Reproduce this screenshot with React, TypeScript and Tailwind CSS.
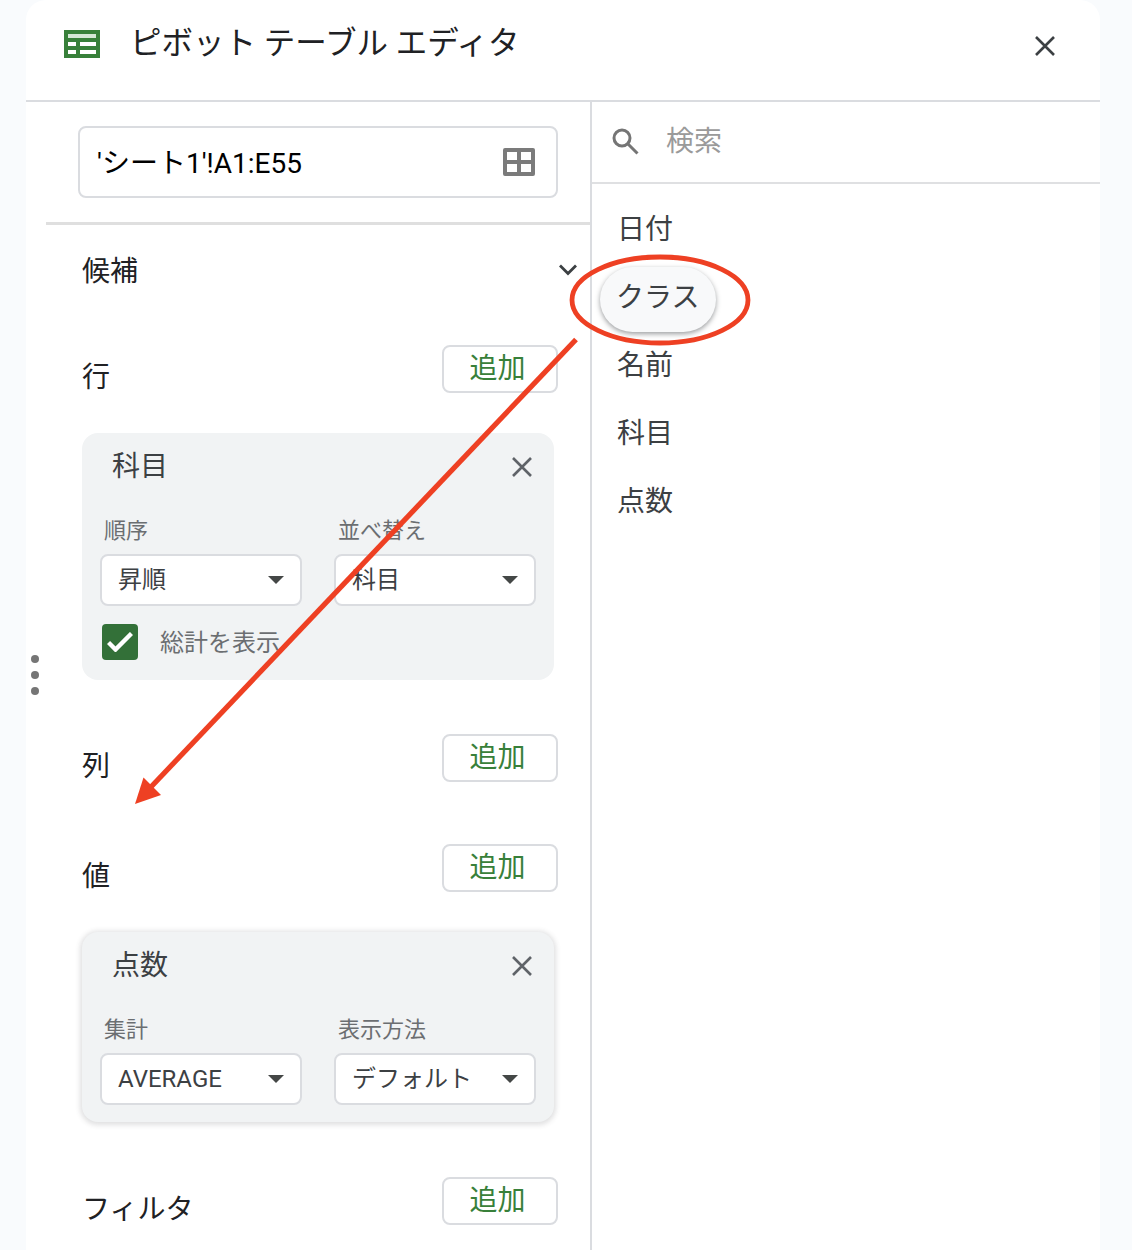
import React from "react";

function CloseIcon({ className }: { className: string }) {
  return (
    <svg viewBox="0 0 20 20" className={className} fill="none" stroke="currentColor" strokeWidth="2.6">
      <path d="M1 1 19 19M19 1 1 19" />
    </svg>
  );
}

function TableIcon() {
  return (
    <svg viewBox="0 0 36 28" className="h-7 w-9" shapeRendering="crispEdges">
      <path fill="#38803a" d="M0 0h36v28H0z" />
      <path fill="#d5e7d6" d="M4 4h28v4H4z" />
      <path fill="#fff" d="M4 12h8v4H4zM16 12h16v4H16zM4 20h8v4H4zM16 20h16v4H16z" />
    </svg>
  );
}

function GridIcon() {
  return (
    <svg viewBox="0 0 32 28" className="h-7 w-8" fill="#7b7b7b">
      <path
        fillRule="evenodd"
        d="M2 0h28a2 2 0 0 1 2 2v24a2 2 0 0 1-2 2H2a2 2 0 0 1-2-2V2a2 2 0 0 1 2-2zM4 4v8h10V4zM18 4v8h10V4zM4 16v8h10v-8zM18 16v8h10v-8z"
      />
    </svg>
  );
}

function Select({ label, value }: { label: string; value: string }) {
  return (
    <div className="w-[202px]">
      <div className="h-8 pl-1 text-[22px] leading-[34px] text-[#6b6e71]">{label}</div>
      <div className="mt-2 flex h-[52px] items-center justify-between rounded-lg border-2 border-[#dadce0] bg-white pr-4 pl-4 text-2xl leading-[46px] text-[#3c4043]">
        <span className="whitespace-nowrap">{value}</span>
        <svg viewBox="0 0 16 8" className="h-2 w-4" fill="#444746">
          <path d="M0 0h16L8 8z" />
        </svg>
      </div>
    </div>
  );
}

function SectionHead({ title }: { title: string }) {
  return (
    <div className="flex h-12 items-start justify-between pr-8 pl-14">
      <span className="mt-2 h-12 text-[28px] leading-[50px] text-[#202124]">{title}</span>
      <button className="flex h-12 w-[116px] justify-center rounded-lg border-2 border-[#dadce0] bg-white pr-[5px] text-[28px] leading-[44px] text-[#38803a]">
        追加
      </button>
    </div>
  );
}

function CardHead({ title }: { title: string }) {
  return (
    <div className="flex h-16 items-center justify-between pr-[22px] pl-[30px] text-[28px] text-[#3c4043]">
      <span className="h-16 leading-[68px]">{title}</span>
      <CloseIcon className="mt-1 h-5 w-5 text-[#5f6368]" />
    </div>
  );
}

const item = "h-[68px] pl-[25px] text-[28px] leading-[70px] text-[#3c4043]";

export default function App() {
  return (
    <div className="relative h-[1250px] w-[1132px] overflow-hidden bg-[#f9fbfd] font-[Roboto,'Noto_Sans_CJK_JP',sans-serif]">
      <div className="ml-[26px] h-full w-[1074px] rounded-t-[20px] bg-white">
        <header className="flex h-[102px] items-start border-b-2 border-[#dadce0] pl-[38px]">
          <div className="mt-[30px]">
            <TableIcon />
          </div>
          <h1 className="ml-[30px] h-[84px] text-[31.5px] leading-[88px] whitespace-pre text-[#202124]">
            ピボット テーブル エディタ
          </h1>
          <CloseIcon className="mt-9 mr-[45px] ml-auto h-5 w-5 text-[#3c4043]" />
        </header>

        <div className="flex h-[1148px]">
          <section className="relative w-[566px] shrink-0 border-r-2 border-[#dadce0] pt-6">
            <div className="mr-8 ml-[52px] flex h-[72px] items-center justify-between rounded-lg border-2 border-[#dadce0] pr-[21px] pl-[17px] text-[28px] text-black">
              <span className="h-[68px] leading-[72px]">'シート1'!A1:E55</span>
              <GridIcon />
            </div>
            <div className="mt-6 ml-5 h-[3px] bg-[#dfdfdf]" />

            <div className="flex h-[90px] items-center justify-between pr-[13px] pl-14 text-[28px] text-[#202124]">
              <span className="h-[90px] leading-[94px]">候補</span>
              <svg viewBox="0 0 18 12" className="h-3 w-[18px]" fill="none" stroke="#3c4043" strokeWidth="2.8">
                <path d="m1 1.5 8 8 8-8" />
              </svg>
            </div>

            <div className="mt-[30px]">
              <SectionHead title="行" />
            </div>
            <div className="mt-10 mr-9 ml-14 h-[247px] rounded-2xl bg-[#f1f3f4]">
              <CardHead title="科目" />
              <div className="mt-[17px] flex justify-between px-[18px]">
                <Select label="順序" value="昇順" />
                <Select label="並べ替え" value="科目" />
              </div>
              <div className="mt-[18px] flex h-9 items-center pl-5">
                <div className="flex h-9 w-9 items-center justify-center rounded bg-[#337038]">
                  <svg viewBox="0 0 26 20" className="h-5 w-[26px]" fill="none" stroke="#fff" strokeWidth="4.4">
                    <path d="m1.500 10.500 7 7L24.500 1.500" />
                  </svg>
                </div>
                <span className="ml-[22px] h-9 text-2xl leading-[38px] text-[#6b6e71]">総計を表示</span>
              </div>
            </div>

            <div className="mt-[54px]">
              <SectionHead title="列" />
            </div>
            <div className="mt-[62px]">
              <SectionHead title="値" />
            </div>
            <div className="mt-10 mr-9 ml-14 h-[190px] rounded-2xl bg-[#f1f3f4] shadow-[0_1px_5px_2px_rgba(60,64,67,0.16)]">
              <CardHead title="点数" />
              <div className="mt-[17px] flex justify-between px-[18px]">
                <Select label="集計" value="AVERAGE" />
                <Select label="表示方法" value="デフォルト" />
              </div>
            </div>
            <div className="mt-[55px]">
              <SectionHead title="フィルタ" />
            </div>

            <div className="absolute top-[553px] left-[5px] flex flex-col gap-2">
              <i className="h-2 w-2 rounded-full bg-[#757575]" />
              <i className="h-2 w-2 rounded-full bg-[#757575]" />
              <i className="h-2 w-2 rounded-full bg-[#757575]" />
            </div>
          </section>

          <aside className="flex-1">
            <div className="flex h-[82px] items-center border-b-2 border-[#dfe0e2] pl-5">
              <svg viewBox="0 0 28 28" className="h-7 w-7" fill="none" stroke="#757575" strokeWidth="3">
                <circle cx="10" cy="10" r="8" />
                <path d="m16 16 9.500 9.500" />
              </svg>
              <span className="ml-[26px] text-[28px] leading-[78px] text-[#9a9a9a]">検索</span>
            </div>
            <ul className="pt-[11px]">
              <li className={item}>日付</li>
              <li className="h-[68px] pt-1 pl-2">
                <div className="h-[65px] w-[116px] rounded-[33px] bg-[#f8f9fa] pl-4 text-[28px] leading-[62px] text-[#3c4043] shadow-[0_2px_5px_rgba(60,64,67,0.5)]">
                  クラス
                </div>
              </li>
              <li className={item}>名前</li>
              <li className={item}>科目</li>
              <li className={item}>点数</li>
            </ul>
          </aside>
        </div>
      </div>

      <svg viewBox="0 0 1132 1250" className="pointer-events-none absolute inset-0 h-full w-full" fill="none">
        <ellipse cx="660" cy="300" rx="88" ry="43" stroke="#ee4023" strokeWidth="4.8" />
        <path d="M576 339.500 150 788" stroke="#ee4023" strokeWidth="5.2" />
        <path d="m135 804 8.500-26.500L161 795z" fill="#ee4023" />
      </svg>
    </div>
  );
}
